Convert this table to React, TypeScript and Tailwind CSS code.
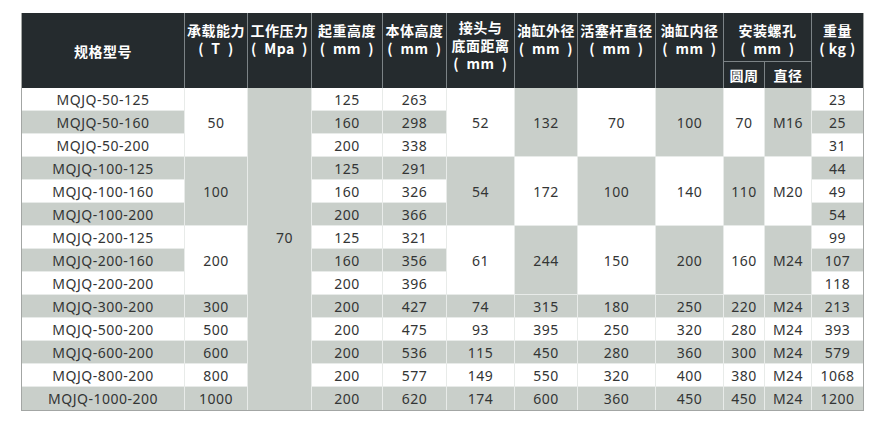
import React from "react";

const GRAY = "bg-[#c9cfca]";
const WHITE = "bg-white";

type Row = {
  model: string;
  lift: number;
  height: number;
  weight: number;
};

const rows: Row[] = [
  { model: "MQJQ-50-125", lift: 125, height: 263, weight: 23 },
  { model: "MQJQ-50-160", lift: 160, height: 298, weight: 25 },
  { model: "MQJQ-50-200", lift: 200, height: 338, weight: 31 },
  { model: "MQJQ-100-125", lift: 125, height: 291, weight: 44 },
  { model: "MQJQ-100-160", lift: 160, height: 326, weight: 49 },
  { model: "MQJQ-100-200", lift: 200, height: 366, weight: 54 },
  { model: "MQJQ-200-125", lift: 125, height: 321, weight: 99 },
  { model: "MQJQ-200-160", lift: 160, height: 356, weight: 107 },
  { model: "MQJQ-200-200", lift: 200, height: 396, weight: 118 },
  { model: "MQJQ-300-200", lift: 200, height: 427, weight: 213 },
  { model: "MQJQ-500-200", lift: 200, height: 475, weight: 393 },
  { model: "MQJQ-600-200", lift: 200, height: 536, weight: 579 },
  { model: "MQJQ-800-200", lift: 200, height: 577, weight: 1068 },
  { model: "MQJQ-1000-200", lift: 200, height: 620, weight: 1200 },
];

// grouped columns: capacity, distance, outer, rod, inner, circle, thread
const groups = [
  { cap: "50", dist: "52", outer: "132", rod: "70", inner: "100", circle: "70", thread: "M16" },
  { cap: "100", dist: "54", outer: "172", rod: "100", inner: "140", circle: "110", thread: "M20" },
  { cap: "200", dist: "61", outer: "244", rod: "150", inner: "200", circle: "160", thread: "M24" },
];

const singles = [
  { cap: "300", dist: "74", outer: "315", rod: "180", inner: "250", circle: "220", thread: "M24" },
  { cap: "500", dist: "93", outer: "395", rod: "250", inner: "320", circle: "280", thread: "M24" },
  { cap: "600", dist: "115", outer: "450", rod: "280", inner: "360", circle: "300", thread: "M24" },
  { cap: "800", dist: "149", outer: "550", rod: "320", inner: "400", circle: "380", thread: "M24" },
  { cap: "1000", dist: "174", outer: "600", rod: "360", inner: "450", circle: "450", thread: "M24" },
];

const widths = [163, 63, 64, 71, 64, 68, 63, 78, 68, 41, 47, 51];

function Td({
  children,
  gray,
  rowSpan,
  last,
  bottom,
  extra,
}: {
  children: React.ReactNode;
  gray: boolean;
  rowSpan?: number;
  last?: boolean;
  bottom?: boolean;
  extra?: string;
}) {
  return (
    <td
      rowSpan={rowSpan}
      className={`${gray ? GRAY : WHITE} p-0 text-center align-middle border-[#e8ebe9] ${
        last ? "" : "border-r"
      } ${bottom ? "" : "border-b"} ${extra ?? ""}`}
    >
      {children}
    </td>
  );
}

function Th({
  children,
  rowSpan,
  colSpan,
  last,
  bottom,
  middle,
  pt,
}: {
  children: React.ReactNode;
  rowSpan?: number;
  colSpan?: number;
  last?: boolean;
  bottom?: boolean;
  middle?: boolean;
  pt?: string;
}) {
  return (
    <th
      rowSpan={rowSpan}
      colSpan={colSpan}
      className={`p-0 font-bold text-white text-[14px] leading-[18px] whitespace-pre border-[#7c8386] ${
        last ? "" : "border-r"
      } ${bottom ? "border-b" : ""} ${middle ? "align-middle" : `align-top ${pt ?? "pt-[8px]"}`}`}
      style={{ fontFamily: '"Noto Sans CJK SC", sans-serif' }}
    >
      {children}
    </th>
  );
}

export default function App() {
  return (
    <div className="w-[879px] h-[424px] bg-white pt-[13px] pl-[21px]">
      <div
        className="w-[843px] border-x border-b border-[#a3a6a4]"
        style={{ fontFamily: '"Noto Sans", "Noto Sans CJK SC", sans-serif' }}
      >
        <table className="w-[841px] table-fixed border-separate border-spacing-0 text-[14px] tracking-[0.5px] text-[#333535]">
          <colgroup>
            {widths.map((w, i) => (
              <col key={i} style={{ width: w }} />
            ))}
          </colgroup>
          <thead className="bg-[#252b2e]">
            <tr className="h-[49px]">
              <Th rowSpan={2} middle>
                规格型号
              </Th>
              <Th rowSpan={2}>
                承载能力
                <br />
                {"(  T  )"}
              </Th>
              <Th rowSpan={2}>
                工作压力
                <br />
                {"(  Mpa  )"}
              </Th>
              <Th rowSpan={2}>
                起重高度
                <br />
                {"(  mm  )"}
              </Th>
              <Th rowSpan={2}>
                本体高度
                <br />
                {"(  mm  )"}
              </Th>
              <Th rowSpan={2} pt="pt-[5px]">
                接头与
                <br />
                底面距离
                <br />
                {"(  mm  )"}
              </Th>
              <Th rowSpan={2}>
                油缸外径
                <br />
                {"(  mm  )"}
              </Th>
              <Th rowSpan={2}>
                活塞杆直径
                <br />
                {"(  mm  )"}
              </Th>
              <Th rowSpan={2}>
                油缸内径
                <br />
                {"(  mm  )"}
              </Th>
              <Th colSpan={2} bottom>
                安装螺孔
                <br />
                {"(  mm  )"}
              </Th>
              <Th rowSpan={2} last>
                重量
                <br />
                {"( kg )"}
              </Th>
            </tr>
            <tr className="h-[26px]">
              <Th middle>圆周</Th>
              <Th middle>直径</Th>
            </tr>
          </thead>
          <tbody>
            {rows.map((r, i) => {
              const odd = i % 2 === 1;
              const bottom = i === rows.length - 1;
              const gi = Math.floor(i / 3);
              const isGroupStart = i < 9 && i % 3 === 0;
              const inGroup = i < 9;
              const g = inGroup ? groups[gi] : singles[i - 9];
              const gOdd = gi % 2 === 1;
              const a = inGroup ? gOdd : odd; // capacity, dist, rod, circle
              const b = inGroup ? !gOdd : odd; // outer, inner, thread
              const span = inGroup ? 3 : undefined;
              const show = !inGroup || isGroupStart;
              return (
                <tr key={r.model} className="h-[23px]">
                  <Td gray={odd} bottom={bottom}>
                    {r.model}
                  </Td>
                  {show && (
                    <Td gray={a} rowSpan={span} bottom={bottom}>
                      {g.cap}
                    </Td>
                  )}
                  {i === 0 && (
                    <Td gray rowSpan={14} bottom extra="pl-[10px] pb-[23px]">
                      70
                    </Td>
                  )}
                  <Td gray={odd} bottom={bottom}>
                    {r.lift}
                  </Td>
                  <Td gray={odd} bottom={bottom}>
                    {r.height}
                  </Td>
                  {show && (
                    <>
                      <Td gray={a} rowSpan={span} bottom={bottom}>
                        {g.dist}
                      </Td>
                      <Td gray={b} rowSpan={span} bottom={bottom}>
                        {g.outer}
                      </Td>
                      <Td gray={a} rowSpan={span} bottom={bottom}>
                        {g.rod}
                      </Td>
                      <Td gray={b} rowSpan={span} bottom={bottom}>
                        {g.inner}
                      </Td>
                      <Td gray={a} rowSpan={span} bottom={bottom}>
                        {g.circle}
                      </Td>
                      <Td gray={b} rowSpan={span} bottom={bottom}>
                        {g.thread}
                      </Td>
                    </>
                  )}
                  <Td gray={odd} last bottom={bottom}>
                    {r.weight}
                  </Td>
                </tr>
              );
            })}
          </tbody>
        </table>
      </div>
    </div>
  );
}
